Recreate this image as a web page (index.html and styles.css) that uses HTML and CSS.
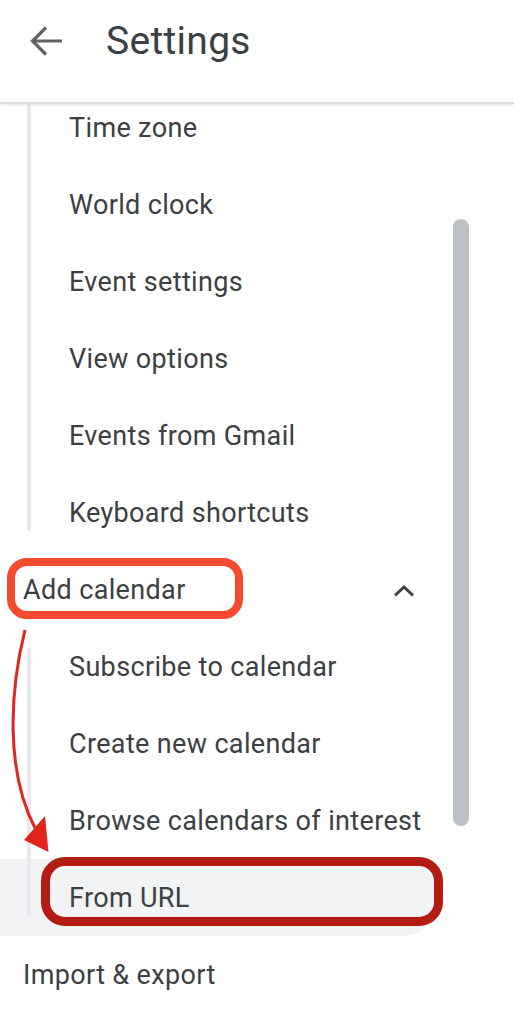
FILE: index.html
```html
<!DOCTYPE html>
<html lang="en">
<head>
<meta charset="utf-8">
<title>Settings</title>
<link rel="stylesheet" href="styles.css">
</head>
<body>
<div class="page">
  <header class="topbar">
    <svg class="back" width="40" height="40" viewBox="0 0 40 40" aria-hidden="true">
      <path d="M7 20H36M20 6.5L6.5 20L20 33.5" fill="none" stroke="#5f6368" stroke-width="3.2"/>
    </svg>
    <h1 class="title">Settings</h1>
  </header>
  <div class="viewport">
    <div class="list">
      <div class="group group-first">
        <div class="items">
          <div class="row sub">Time zone</div>
          <div class="row sub">World clock</div>
          <div class="row sub">Event settings</div>
          <div class="row sub">View options</div>
          <div class="row sub">Events from Gmail</div>
          <div class="row sub">Keyboard shortcuts</div>
        </div>
        <div class="line"></div>
      </div>
      <div class="row top expander">
        <span>Add calendar</span>
        <svg class="chev" width="24" height="24" viewBox="0 0 24 24" aria-hidden="true">
          <path d="M3 17.5L12 9L21 17.5" fill="none" stroke="#3c4043" stroke-width="3"/>
        </svg>
      </div>
      <div class="group">
        <div class="items">
          <div class="row sub">Subscribe to calendar</div>
          <div class="row sub">Create new calendar</div>
          <div class="row sub">Browse calendars of interest</div>
          <div class="row sub active">From URL</div>
        </div>
        <div class="line"></div>
      </div>
      <div class="row top">Import &amp; export</div>
    </div>
  </div>

  <div class="scrollbar"></div>
  <div class="mark mark-add"></div>
  <div class="mark mark-url"></div>
  <svg class="arrow" width="60" height="240" viewBox="0 620 60 240" aria-hidden="true">
    <path d="M25 630C10 690 5 770 35 828" fill="none" stroke="#e0261c" stroke-width="3"/>
    <polygon points="24,840 45,816 48.5,852" fill="#e0261c"/>
  </svg>
</div>
</body>
</html>
```

FILE: styles.css
```css
* { box-sizing: border-box; }
html, body {
  margin: 0;
  padding: 0;
  background: #ffffff;
}
body {
  font-family: Roboto, "Liberation Sans", Arial, sans-serif;
  color: #3c4043;
  width: 514px;
  height: 1024px;
  overflow: hidden;
}
.page {
  position: relative;
  width: 514px;
  height: 1024px;
  overflow: hidden;
}
.topbar {
  position: relative;
  z-index: 1;
  display: flex;
  align-items: flex-start;
  height: 104px;
  padding: 21px 0 0 26px;
  border-bottom: 2px solid #dadce0;
  box-shadow: 0 1px 2px rgba(60, 64, 67, 0.15);
  background: #ffffff;
}
.back {
  flex: none;
  display: block;
}
.title {
  margin: 0 0 0 40px;
  font-size: 39px;
  line-height: 40px;
  font-weight: 400;
  letter-spacing: 0.3px;
  color: #3c4043;
}
.viewport {
  height: 920px;
  overflow: hidden;
}
.list {
  margin-top: -15px;
}
.group {
  display: grid;
  grid-template-columns: 27px 4px 1fr;
}
.items {
  grid-area: 1 / 1 / 2 / 4;
}
.line {
  grid-area: 1 / 2 / 2 / 3;
  background: #e8eaed;
  margin: 20px 0;
}
.group-first .line {
  margin-top: 0;
}
.row {
  display: flex;
  align-items: center;
  height: 77px;
  font-size: 27px;
  letter-spacing: 0.35px;
  white-space: nowrap;
}
.row.sub {
  padding-left: 69px;
}
.row.top {
  padding-left: 23px;
}
.expander {
  justify-content: space-between;
  padding-right: 98px;
}
.chev {
  display: block;
  flex: none;
}
.row.active {
  width: 440px;
  background: #f1f3f4;
  border-radius: 0 40px 40px 0;
}
.scrollbar {
  position: absolute;
  left: 453px;
  top: 219px;
  width: 16px;
  height: 607px;
  border-radius: 8px;
  background: #bdc1c6;
}
.mark {
  position: absolute;
  border-style: solid;
}
.mark-add {
  left: 7px;
  top: 558px;
  width: 236px;
  height: 61px;
  border-width: 8px;
  border-color: #f44a2d;
  border-radius: 20px;
}
.mark-url {
  left: 41px;
  top: 857px;
  width: 402px;
  height: 69px;
  border-width: 9px;
  border-color: #b21c12;
  border-radius: 24px;
}
.arrow {
  position: absolute;
  left: 0;
  top: 620px;
}
```
